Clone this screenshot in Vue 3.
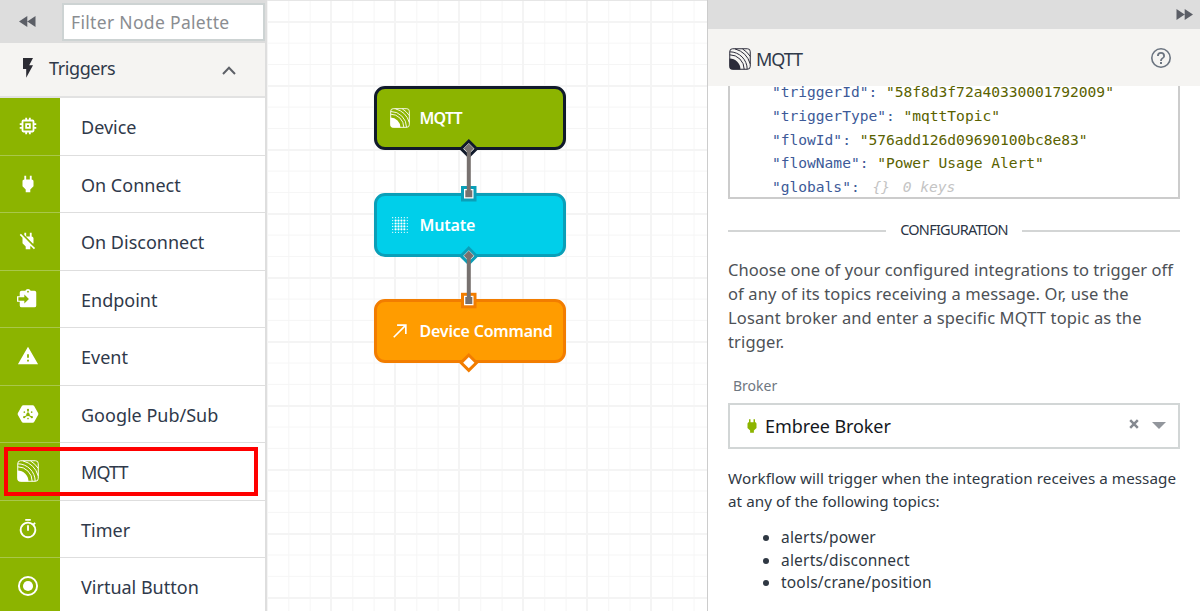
<script setup>
const triggers = [
  { name: 'Device', icon: 'chip' },
  { name: 'On Connect', icon: 'plug' },
  { name: 'On Disconnect', icon: 'unplug' },
  { name: 'Endpoint', icon: 'endpoint' },
  { name: 'Event', icon: 'warn' },
  { name: 'Google Pub/Sub', icon: 'pubsub' },
  { name: 'MQTT', icon: 'mqtt', active: true },
  { name: 'Timer', icon: 'timer' },
  { name: 'Virtual Button', icon: 'button' },
]
const nodes = [
  { name: 'MQTT', icon: 'mqtt', kind: 'green' },
  { name: 'Mutate', icon: 'dots', kind: 'cyan' },
  { name: 'Device Command', icon: 'arrow', kind: 'orange' },
]
const payload = [
  { key: 'triggerId', value: '58f8d3f72a40330001792009' },
  { key: 'triggerType', value: 'mqttTopic' },
  { key: 'flowId', value: '576add126d09690100bc8e83' },
  { key: 'flowName', value: 'Power Usage Alert' },
]
const topics = ['alerts/power', 'alerts/disconnect', 'tools/crane/position']
const dots = []
for (let y = 0; y < 6; y++) for (let x = 0; x < 6; x++) {
  const edge = (n) => (n === 0 || n === 5)
  dots.push({ x: 3.2 + x * 3.5, y: 3.2 + y * 3.5, r: edge(x) || edge(y) ? 0.75 : 1.3 })
}
</script>

<template>
  <svg class="defs" width="0" height="0" aria-hidden="true">
    <symbol id="chip" viewBox="0 0 24 24">
      <path fill="currentColor" d="M15 9H9v6h6V9zm-2 4h-2v-2h2v2zm8-2V9h-2V7a2 2 0 0 0-2-2h-2V3h-2v2h-2V3H9v2H7a2 2 0 0 0-2 2v2H3v2h2v2H3v2h2v2a2 2 0 0 0 2 2h2v2h2v-2h2v2h2v-2h2a2 2 0 0 0 2-2v-2h2v-2h-2v-2h2zm-4 6H7V7h10v10z" />
    </symbol>
    <symbol id="plug" viewBox="0 0 24 24">
      <path fill="currentColor" d="M16 7V3h-2v4h-4V3H8v4c-1.1 0-2 .9-2 2v5.500L9.500 18v3h5v-3l3.500-3.500V9c0-1.100-.9-2-2-2z" />
    </symbol>
    <symbol id="unplug" viewBox="0 0 24 24">
      <path fill="currentColor" d="M18 14.490V9c0-1-1.010-2.010-2-2V3h-2v4h-4V3H8v2.480l9.510 9.500.49-.49zm-1.760 1.770L7.200 7.200 4.200 4.200 3 5.470l3 3v6.020L9.500 18v3h5v-3l.48-.48L18.450 21l1.260-1.260-3.440-3.440z" />
    </symbol>
    <symbol id="endpoint" viewBox="0 0 24 24">
      <path fill="currentColor" d="M19 3h-4.180C14.400 1.840 13.300 1 12 1s-2.400.84-2.820 2H5a2 2 0 0 0-2 2v4H0v6h3v4a2 2 0 0 0 2 2h14a2 2 0 0 0 2-2V5a2 2 0 0 0-2-2zm-7 0a1 1 0 1 1 0 2 1 1 0 0 1 0-2zM8 17v-3H1.500v-4H8V7l5 5-5 5z" />
    </symbol>
    <symbol id="warn" viewBox="0 0 24 24">
      <path fill="currentColor" d="M1 21h22L12 2 1 21zm12-3h-2v-2h2v2zm0-4h-2v-4h2v4z" />
    </symbol>
    <symbol id="pubsub" viewBox="0 0 24 24">
      <path fill="currentColor" d="M6.800 2.500h10.400q1 0 1.500.8L23 10.800q.6 1.200 0 2.400l-4.300 7.500q-.5.8-1.500.8H6.800q-1 0-1.500-.8L1 13.200q-.6-1.200 0-2.400l4.300-7.500q.5-.8 1.500-.8z" />
      <g class="cut">
        <circle cx="12" cy="12.500" r="1.900" /><circle cx="12" cy="7.500" r="1.200" /><circle cx="7.800" cy="15.500" r="1.200" /><circle cx="16.200" cy="15.500" r="1.200" />
        <circle cx="8" cy="10" r=".9" /><circle cx="16" cy="10" r=".9" /><circle cx="12" cy="17" r=".9" />
        <path d="M11.500 8h1v4h-1zM8 14.800l3.500-2.300.6.900-3.500 2.300zM16 14.800l-3.500-2.300-.6.900 3.500 2.300z" />
      </g>
    </symbol>
    <symbol id="mqtt" viewBox="0 0 22 22">
      <path fill="currentColor" d="M.5 10.500a11 11 0 0 1 11 11H3A2.500 2.500 0 0 1 .5 19z" />
      <g fill="none" stroke="currentColor" stroke-width="1">
        <rect x=".75" y=".75" width="20.500" height="20.500" rx="2.800" />
        <path d="M.7 6.800a14.500 14.500 0 0 1 14.500 14.500M.7 3.800a17.500 17.500 0 0 1 17.500 17.500M6 .9A22 22 0 0 1 21.200 15.800M13.500.9A25 25 0 0 1 21.200 8.300" />
      </g>
    </symbol>
    <symbol id="timer" viewBox="0 0 24 24">
      <path fill="currentColor" d="M15 1H9v2h6V1zm-4 13h2V8h-2v6zm8.030-6.610l1.420-1.420c-.43-.51-.9-.99-1.410-1.410l-1.420 1.420A8.960 8.960 0 0 0 12 4a9 9 0 1 0 7.030 3.390zM12 20a7 7 0 1 1 0-14 7 7 0 0 1 0 14z" />
    </symbol>
    <symbol id="button" viewBox="0 0 24 24">
      <circle cx="12" cy="12" r="9.900" fill="none" stroke="currentColor" stroke-width="2.100" /><circle cx="12" cy="12" r="5.500" fill="currentColor" />
    </symbol>
    <symbol id="dots" viewBox="0 0 24 24">
      <circle v-for="(d, i) in dots" :key="i" :cx="d.x" :cy="d.y" :r="d.r" fill="currentColor" />
    </symbol>
    <symbol id="arrow" viewBox="0 0 24 24">
      <path fill="none" stroke="currentColor" stroke-width="2" d="M4.500 19.500L19 5M8.500 5H19v10.500" />
    </symbol>
  </svg>

  <div class="app">
    <aside class="palette">
      <div class="search-row">
        <svg class="rewind" viewBox="0 0 17 11"><path d="M8.300 0v11L0 5.500zM16.500 0v11L8.300 5.500z" /></svg>
        <div class="search"><span>Filter Node Palette</span></div>
      </div>
      <div class="group">
        <svg class="bolt" viewBox="0 0 10 20"><path d="M0 0v11h3.200v8.800L10 7.300H6.200L10 0z" /></svg>
        <span class="group-name">Triggers</span>
        <svg class="chev" viewBox="0 0 14 9"><path d="M1 8l6-6.200L13 8" /></svg>
      </div>
      <div class="list">
        <div v-for="t in triggers" :key="t.name" class="item">
          <div class="swatch"><svg class="ico"><use :href="'#' + t.icon" /></svg></div>
          <span :class="['item-name', { caps: t.active }]">{{ t.name }}</span>
          <div v-if="t.active" class="highlight"></div>
        </div>
      </div>
    </aside>

    <main class="canvas">
      <div v-for="n in nodes" :key="n.name" :class="['node', n.kind]">
        <svg class="node-ico"><use :href="'#' + n.icon" /></svg>
        <span class="node-name">{{ n.name }}</span>
      </div>
      <svg class="wires" width="440" height="611" viewBox="267 0 440 611">
        <path d="M468.800 141l7.700 7.700-7.700 7.700-7.700-7.700z" fill="#fff" stroke="#111a2b" stroke-width="3" />
        <path d="M468.800 248.200l7.700 7.700-7.700 7.700-7.700-7.700z" fill="#fff" stroke="#0a9fb8" stroke-width="3" />
        <path d="M468.800 355l7.700 7.700-7.700 7.700-7.700-7.700z" fill="#fff" stroke="#f27d00" stroke-width="3" />
        <rect x="462.500" y="187.500" width="12.500" height="12.500" fill="#fff" stroke="#0a9fb8" stroke-width="3" />
        <rect x="462.500" y="294.300" width="12.500" height="12.500" fill="#fff" stroke="#f27d00" stroke-width="3" />
        <g fill="#77716f">
          <path d="M468.800 143.500l5 5-5 5-5-5zM468.800 250.700l5 5-5 5-5-5z" />
          <path d="M466.800 149h4v42h-4zM466.800 256h4v42h-4z" />
          <path d="M465.300 190.300h7v7h-7zM465.300 297h7v7h-7z" />
        </g>
      </svg>
    </main>

    <section class="panel">
      <div class="topbar">
        <svg class="forward" viewBox="0 0 17 11"><path d="M.5 0v11l8.200-5.500zM8.700 0v11L17 5.500z" /></svg>
      </div>
      <header class="head">
        <svg class="head-ico"><use href="#mqtt" /></svg>
        <span class="head-name">MQTT</span>
        <svg class="help" viewBox="0 0 24 24"><path d="M11 18h2v-2h-2v2zm1-16a10 10 0 1 0 0 20 10 10 0 0 0 0-20zm0 18.400a8.400 8.400 0 1 1 0-16.800 8.400 8.400 0 0 1 0 16.800zM12 6a4 4 0 0 0-4 4h1.800a2.200 2.200 0 0 1 4.400 0c0 2-3.100 1.800-3.100 5h1.800c0-2.300 3.100-2.500 3.100-5a4 4 0 0 0-4-4z" /></svg>
      </header>
      <div class="body">
        <div class="code">
          <div v-for="p in payload" :key="p.key" class="line"><span class="key">"{{ p.key }}":</span> <span class="val">"{{ p.value }}"</span></div>
          <div class="line"><span class="key">"globals":</span> <span class="muted"><span class="braces">{}</span> 0 keys</span></div>
        </div>
        <div class="divider"><span>CONFIGURATION</span></div>
        <p class="desc">Choose one of your configured integrations to trigger off<br><span class="wide">of any of its topics receiving a message. Or, use the<br>Losant broker and enter a specific MQTT topic as the<br>trigger.</span></p>
        <div class="label">Broker</div>
        <div class="select">
          <svg class="select-plug"><use href="#plug" /></svg>
          <span class="select-value">Embree Broker</span>
          <svg class="clear" viewBox="0 0 10 10"><path d="M1.200 1.200l7.600 7.600M8.800 1.200L1.200 8.800" /></svg>
          <svg class="caret" viewBox="0 0 14 7"><path d="M0 0h14L7 7z" /></svg>
        </div>
        <p class="note">Workflow will trigger when the integration receives a message<br>at any of the following topics:</p>
        <ul class="topics">
          <li v-for="t in topics" :key="t">{{ t }}</li>
        </ul>
      </div>
    </section>
  </div>
</template>

<style>
body { margin: 0; overflow: hidden; }
</style>

<style scoped>
* { box-sizing: border-box; }
.defs { position: absolute; }
.cut { fill: #8cb400; }
.app { display: flex; width: 1200px; height: 611px; overflow: hidden; background: #fff; font-family: "Noto Sans", "Open Sans", sans-serif; color: #2f394a; }
.palette { width: 267px; flex: none; border-right: 2px solid #dedede; display: flex; flex-direction: column; overflow: hidden; }
.search-row { height: 43px; flex: none; background: #ddd; display: flex; align-items: center; }
.rewind { width: 17px; height: 11px; margin-left: 19px; fill: #5b5e66; }
.search { width: 203px; height: 38px; flex: none; margin: 0 0 0 26px; background: #fff; border: 2px solid #cdd3d3; padding-left: 7px; display: flex; align-items: center; font-size: 17.500px; color: #8a8d91; white-space: nowrap; letter-spacing: .32px; }
.group { height: 55px; flex: none; background: #f5f4f2; border-bottom: 2px solid #e2e2e2; display: flex; align-items: center; }
.bolt { width: 10px; height: 20px; margin: -3px 0 0 23px; fill: #2b2b33; }
.group-name { width: 168px; margin: -3px 0 0 16px; font-size: 18px; letter-spacing: -.4px; }
.chev { width: 14px; height: 9px; margin: 2px 0 0 5px; fill: none; stroke: #5d6067; stroke-width: 2; }
.list { flex: none; }
.item { position: relative; height: 57.500px; display: flex; border-bottom: 1.500px solid #dedede; background: #fff; }
.swatch { width: 60px; height: 57.500px; background: #8cb400; color: #fff; display: flex; align-items: center; justify-content: center; padding-right: 4px; border-bottom: 1px solid #a9c74a; }
.ico { width: 22px; height: 22px; }
.item-name { margin-left: 21px; line-height: 58px; font-size: 18px; }
.caps { letter-spacing: -.9px; }
.highlight { position: absolute; left: 4px; top: 4px; width: 254px; height: 49px; border: 4px solid #f00; }
.canvas { position: relative; width: 440px; flex: none; padding: 86px 0 0 106.500px; display: flex; flex-direction: column; gap: 42.700px; border-top: 1px solid #e6e6e6; background-color: #fff; background-image: linear-gradient(90deg, #f4f4f4 2px, transparent 2px), linear-gradient(#f4f4f4 2px, transparent 2px), linear-gradient(90deg, #f5f5f5 1px, transparent 1px), linear-gradient(#f5f5f5 1px, transparent 1px); background-size: 64px 64px, 64px 64px, 21.333px 21.333px, 21.333px 21.333px; background-position: 63px 0, 0 20px, 0 0, 0 -1px; }
.node { width: 192px; height: 64px; margin-top: 0; flex: none; border: 3px solid; border-radius: 11px; display: flex; align-items: center; color: #fff; position: relative; top: -1px; }
.green { background: #8cb400; border-color: #111a2b; }
.cyan { background: #00cfea; border-color: #0a9fb8; }
.orange { background: #ff9c00; border-color: #f27d00; }
.node-ico { width: 20px; height: 20px; margin-left: 13px; }
.node-name { margin-left: 10px; font-size: 16px; font-weight: 600; letter-spacing: -.2px; white-space: nowrap; }
.green .node-name { letter-spacing: -.8px; }
.wires { position: absolute; left: 0; top: -1px; }
.panel { flex: 1; min-width: 0; margin-left: -1px; border-left: 2px solid #ccc; display: flex; flex-direction: column; }
.topbar { height: 29px; flex: none; background: #ddd; display: flex; justify-content: flex-end; align-items: center; padding-right: 7px; }
.forward { width: 17px; height: 11px; fill: #5b5e66; }
.head { height: 57px; flex: none; background: #f5f4f2; display: flex; align-items: center; padding: 3px 27px 0 21px; }
.head-ico { width: 22px; height: 22px; color: #2b2b3a; }
.head-name { flex: 1; margin-left: 5px; font-size: 18px; letter-spacing: -1.100px; }
.help { width: 24px; height: 24px; margin-top: -3px; fill: #6b7480; }
.body { padding: 0 20px; }
.code { height: 113px; border: 2px solid #ccc; border-top: 0; padding-left: 42px; overflow: hidden; font-family: "DejaVu Sans Mono", monospace; font-size: 14.600px; letter-spacing: -.02px; line-height: 23.800px; white-space: pre; }
.line:first-child { margin-top: -6px; }
.key { color: #3d5a98; }
.val { color: #5a6200; }
.muted { color: #c4c4c4; font-style: italic; }
.braces { margin: 0 4px 0 4px; }
.divider { margin-top: 18px; height: 24px; display: flex; align-items: center; gap: 14px; font-size: 14.500px; letter-spacing: -.75px; color: #2b3444; }
.divider::before, .divider::after { content: ""; flex: 1; height: 2px; background: #d3d5d5; margin-top: 3px; }
.desc { margin: 17px 0 0; font-size: 16.500px; line-height: 24px; letter-spacing: .06px; color: #4d5156; white-space: nowrap; }
.wide { letter-spacing: .13px; }
.label { margin: 22px 0 0 5px; font-size: 14px; line-height: 20px; color: #6f7781; }
.select { height: 46px; margin-top: 7px; border: 2px solid #d2d6d6; display: flex; align-items: center; padding: 0 12px 0 13px; }
.select-plug { width: 18px; height: 18px; color: #8cb400; }
.select-value { flex: 1; margin: -1px 0 0 4px; font-size: 18px; letter-spacing: -.08px; color: #14181e; }
.clear { width: 10px; height: 10px; margin: -4px 13px 0 0; stroke: #858990; stroke-width: 2.500; }
.caret { width: 14px; height: 7px; margin-top: -1px; fill: #92969c; }
.note { margin: 18px 0 0; font-size: 15.200px; line-height: 22.500px; letter-spacing: .07px; color: #2f3843; white-space: nowrap; }
.topics { margin: 14px 0 0; padding-left: 53px; font-size: 15.500px; letter-spacing: .2px; line-height: 22.700px; color: #2f3843; }
</style>
